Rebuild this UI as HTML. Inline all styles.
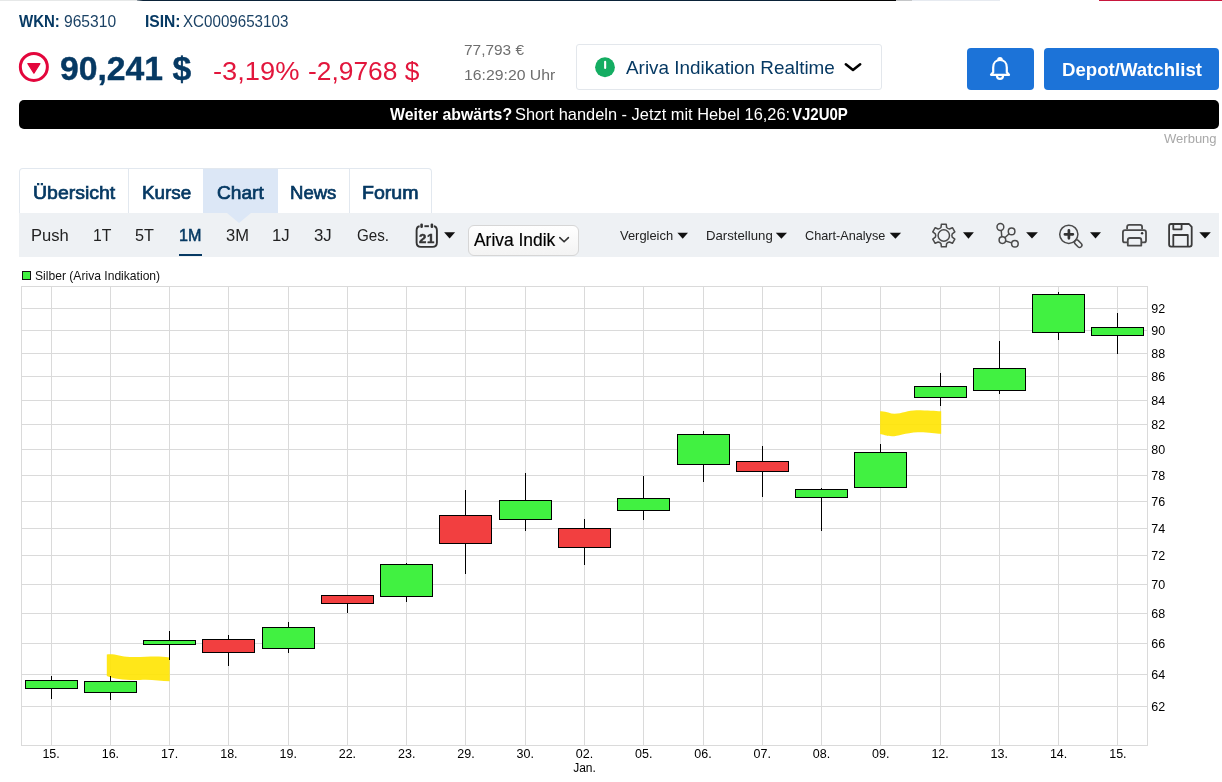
<!DOCTYPE html>
<html><head><meta charset="utf-8">
<style>
html,body{margin:0;padding:0;background:#fff;width:1222px;height:782px;overflow:hidden;position:relative;font-family:"Liberation Sans",sans-serif}
.t{position:absolute;line-height:0;white-space:nowrap;transform-origin:0 0}
svg{will-change:transform}
.b{position:absolute;box-sizing:border-box}
</style></head><body>

<div class="b" style="left:0;top:0;width:137px;height:1px;background:#e6e8e8"></div>
<div class="b" style="left:137px;top:0;width:6px;height:1px;background:linear-gradient(90deg,#9aa3aa,#0a2238)"></div>
<div class="b" style="left:143px;top:0;width:677px;height:1px;background:#0a2238"></div>
<div class="b" style="left:820px;top:0;width:76px;height:1px;background:#050505"></div>
<div class="b" style="left:896px;top:0;width:16px;height:1px;background:#c4c6c8"></div>
<div class="b" style="left:912px;top:0;width:88px;height:1px;background:#e6eaf0"></div>
<div class="b" style="left:1099px;top:0;width:123px;height:1px;background:#c8163c"></div>
<div class="b" style="left:0;top:1px;width:1222px;height:1px;background:rgba(255,255,255,0)"></div>
<div class="b" style="left:576px;top:44px;width:306px;height:46px;border:1px solid #e3e7ec;border-radius:3px"></div>
<div class="b" style="left:967px;top:48px;width:67px;height:42px;background:#1c73d8;border-radius:4px"></div>
<div class="b" style="left:1044px;top:48px;width:175px;height:42px;background:#1c73d8;border-radius:4px"></div>
<div class="b" style="left:19px;top:100px;width:1200px;height:29px;background:#000;border-radius:5px"></div>
<div class="b" style="left:19px;top:168px;width:413px;height:46px;border:1px solid #e2e8ef;border-bottom:none;border-radius:4px 4px 0 0"></div>
<div class="b" style="left:128px;top:169px;width:1px;height:44px;background:#e2e8ef"></div>
<div class="b" style="left:203px;top:169px;width:75px;height:44px;background:#dce7f6"></div>
<div class="b" style="left:349px;top:169px;width:1px;height:44px;background:#e2e8ef"></div>
<div class="b" style="left:19px;top:213px;width:1200px;height:44px;background:#eef1f4"></div>
<div class="b" style="left:227px;top:213px;width:0;height:0;border-left:12px solid transparent;border-right:12px solid transparent;border-top:10px solid #dce7f6"></div>
<div class="b" style="left:179px;top:253.6px;width:22.8px;height:2.5px;background:#063963"></div>
<div class="b" style="left:468px;top:225px;width:111px;height:31px;border:1px solid #d6d6d6;border-radius:6px;background:linear-gradient(#fff,#f3f3f3)"></div>
<div class="b" style="left:22px;top:271px;width:9px;height:9px;background:#41f141;border:1px solid #111"></div>

<svg style="position:absolute;left:0;top:0" width="1222" height="782" font-family="Liberation Sans"><line x1="21.5" y1="706.5" x2="1147.5" y2="706.5" stroke="#dadada" stroke-width="1"/>
<line x1="21.5" y1="674.5" x2="1147.5" y2="674.5" stroke="#dadada" stroke-width="1"/>
<line x1="21.5" y1="643.5" x2="1147.5" y2="643.5" stroke="#dadada" stroke-width="1"/>
<line x1="21.5" y1="613.5" x2="1147.5" y2="613.5" stroke="#dadada" stroke-width="1"/>
<line x1="21.5" y1="584.5" x2="1147.5" y2="584.5" stroke="#dadada" stroke-width="1"/>
<line x1="21.5" y1="555.5" x2="1147.5" y2="555.5" stroke="#dadada" stroke-width="1"/>
<line x1="21.5" y1="528.5" x2="1147.5" y2="528.5" stroke="#dadada" stroke-width="1"/>
<line x1="21.5" y1="501.5" x2="1147.5" y2="501.5" stroke="#dadada" stroke-width="1"/>
<line x1="21.5" y1="475.5" x2="1147.5" y2="475.5" stroke="#dadada" stroke-width="1"/>
<line x1="21.5" y1="449.5" x2="1147.5" y2="449.5" stroke="#dadada" stroke-width="1"/>
<line x1="21.5" y1="424.5" x2="1147.5" y2="424.5" stroke="#dadada" stroke-width="1"/>
<line x1="21.5" y1="400.5" x2="1147.5" y2="400.5" stroke="#dadada" stroke-width="1"/>
<line x1="21.5" y1="376.5" x2="1147.5" y2="376.5" stroke="#dadada" stroke-width="1"/>
<line x1="21.5" y1="353.5" x2="1147.5" y2="353.5" stroke="#dadada" stroke-width="1"/>
<line x1="21.5" y1="330.5" x2="1147.5" y2="330.5" stroke="#dadada" stroke-width="1"/>
<line x1="21.5" y1="308.5" x2="1147.5" y2="308.5" stroke="#dadada" stroke-width="1"/>
<line x1="51.5" y1="286.5" x2="51.5" y2="745.5" stroke="#dadada" stroke-width="1"/>
<line x1="110.5" y1="286.5" x2="110.5" y2="745.5" stroke="#dadada" stroke-width="1"/>
<line x1="169.5" y1="286.5" x2="169.5" y2="745.5" stroke="#dadada" stroke-width="1"/>
<line x1="228.5" y1="286.5" x2="228.5" y2="745.5" stroke="#dadada" stroke-width="1"/>
<line x1="288.5" y1="286.5" x2="288.5" y2="745.5" stroke="#dadada" stroke-width="1"/>
<line x1="347.5" y1="286.5" x2="347.5" y2="745.5" stroke="#dadada" stroke-width="1"/>
<line x1="406.5" y1="286.5" x2="406.5" y2="745.5" stroke="#dadada" stroke-width="1"/>
<line x1="465.5" y1="286.5" x2="465.5" y2="745.5" stroke="#dadada" stroke-width="1"/>
<line x1="525.5" y1="286.5" x2="525.5" y2="745.5" stroke="#dadada" stroke-width="1"/>
<line x1="584.5" y1="286.5" x2="584.5" y2="745.5" stroke="#dadada" stroke-width="1"/>
<line x1="643.5" y1="286.5" x2="643.5" y2="745.5" stroke="#dadada" stroke-width="1"/>
<line x1="703.5" y1="286.5" x2="703.5" y2="745.5" stroke="#dadada" stroke-width="1"/>
<line x1="762.5" y1="286.5" x2="762.5" y2="745.5" stroke="#dadada" stroke-width="1"/>
<line x1="821.5" y1="286.5" x2="821.5" y2="745.5" stroke="#dadada" stroke-width="1"/>
<line x1="880.5" y1="286.5" x2="880.5" y2="745.5" stroke="#dadada" stroke-width="1"/>
<line x1="940.5" y1="286.5" x2="940.5" y2="745.5" stroke="#dadada" stroke-width="1"/>
<line x1="999.5" y1="286.5" x2="999.5" y2="745.5" stroke="#dadada" stroke-width="1"/>
<line x1="1058.5" y1="286.5" x2="1058.5" y2="745.5" stroke="#dadada" stroke-width="1"/>
<line x1="1117.5" y1="286.5" x2="1117.5" y2="745.5" stroke="#dadada" stroke-width="1"/>
<rect x="21.5" y="286.5" width="1126" height="459" fill="none" stroke="#dadada" stroke-width="1"/>
<path d="M106.8,654.4 C115,653.5 120,656.5 130,657 C145,657.5 155,655.5 169.7,657.5 L169.7,681.2 C160,681 150,679 140,680 C125,680.5 115,679 106.8,676 Z" fill="#ffe400" opacity="0.9"/>
<path d="M880.1,411.3 C886,410.8 890,413.8 894.5,413.8 C902,413.5 908,410.2 916.5,410.2 C928,410.2 935,411 941.2,411.3 L941.2,433.7 C935,433.5 928,432 918,432.2 C905,432.8 898,436.3 892,436.3 C886,436.3 883,434.5 880.1,434.1 Z" fill="#ffe400" opacity="0.9"/>
<line x1="51.5" y1="676" x2="51.5" y2="699" stroke="#000" stroke-width="1"/>
<rect x="25.5" y="680.5" width="52" height="8.0" fill="#41f141" stroke="#000" stroke-width="1"/>
<line x1="110.5" y1="676" x2="110.5" y2="700" stroke="#000" stroke-width="1"/>
<rect x="84.5" y="681.5" width="52" height="11.0" fill="#41f141" stroke="#000" stroke-width="1"/>
<line x1="169.5" y1="631" x2="169.5" y2="660" stroke="#000" stroke-width="1"/>
<rect x="143.5" y="640.5" width="52" height="4.0" fill="#41f141" stroke="#000" stroke-width="1"/>
<line x1="228.5" y1="635" x2="228.5" y2="666" stroke="#000" stroke-width="1"/>
<rect x="202.5" y="639.5" width="52" height="13.0" fill="#f23f40" stroke="#000" stroke-width="1"/>
<line x1="288.5" y1="622" x2="288.5" y2="653" stroke="#000" stroke-width="1"/>
<rect x="262.5" y="627.5" width="52" height="21.0" fill="#41f141" stroke="#000" stroke-width="1"/>
<line x1="347.5" y1="595" x2="347.5" y2="613" stroke="#000" stroke-width="1"/>
<rect x="321.5" y="595.5" width="52" height="8.0" fill="#f23f40" stroke="#000" stroke-width="1"/>
<line x1="406.5" y1="563" x2="406.5" y2="602" stroke="#000" stroke-width="1"/>
<rect x="380.5" y="564.5" width="52" height="32.0" fill="#41f141" stroke="#000" stroke-width="1"/>
<line x1="465.5" y1="490" x2="465.5" y2="574" stroke="#000" stroke-width="1"/>
<rect x="439.5" y="515.5" width="52" height="28.0" fill="#f23f40" stroke="#000" stroke-width="1"/>
<line x1="525.5" y1="473" x2="525.5" y2="531" stroke="#000" stroke-width="1"/>
<rect x="499.5" y="500.5" width="52" height="19.0" fill="#41f141" stroke="#000" stroke-width="1"/>
<line x1="584.5" y1="519" x2="584.5" y2="565" stroke="#000" stroke-width="1"/>
<rect x="558.5" y="528.5" width="52" height="19.0" fill="#f23f40" stroke="#000" stroke-width="1"/>
<line x1="643.5" y1="476" x2="643.5" y2="520" stroke="#000" stroke-width="1"/>
<rect x="617.5" y="498.5" width="52" height="12.0" fill="#41f141" stroke="#000" stroke-width="1"/>
<line x1="703.5" y1="431" x2="703.5" y2="482" stroke="#000" stroke-width="1"/>
<rect x="677.5" y="434.5" width="52" height="30.0" fill="#41f141" stroke="#000" stroke-width="1"/>
<line x1="762.5" y1="446" x2="762.5" y2="497" stroke="#000" stroke-width="1"/>
<rect x="736.5" y="461.5" width="52" height="10.0" fill="#f23f40" stroke="#000" stroke-width="1"/>
<line x1="821.5" y1="488" x2="821.5" y2="531" stroke="#000" stroke-width="1"/>
<rect x="795.5" y="489.5" width="52" height="8.0" fill="#41f141" stroke="#000" stroke-width="1"/>
<line x1="880.5" y1="444" x2="880.5" y2="487" stroke="#000" stroke-width="1"/>
<rect x="854.5" y="452.5" width="52" height="35.0" fill="#41f141" stroke="#000" stroke-width="1"/>
<line x1="940.5" y1="373" x2="940.5" y2="406" stroke="#000" stroke-width="1"/>
<rect x="914.5" y="386.5" width="52" height="11.0" fill="#41f141" stroke="#000" stroke-width="1"/>
<line x1="999.5" y1="341" x2="999.5" y2="394" stroke="#000" stroke-width="1"/>
<rect x="973.5" y="368.5" width="52" height="22.0" fill="#41f141" stroke="#000" stroke-width="1"/>
<line x1="1058.5" y1="292" x2="1058.5" y2="340" stroke="#000" stroke-width="1"/>
<rect x="1032.5" y="294.5" width="52" height="38.0" fill="#41f141" stroke="#000" stroke-width="1"/>
<line x1="1117.5" y1="313" x2="1117.5" y2="354" stroke="#000" stroke-width="1"/>
<rect x="1091.5" y="327.5" width="52" height="8.0" fill="#41f141" stroke="#000" stroke-width="1"/>
<text x="1151.2" y="710.85" font-size="12.5" fill="#000">62</text>
<text x="1151.2" y="678.85" font-size="12.5" fill="#000">64</text>
<text x="1151.2" y="647.85" font-size="12.5" fill="#000">66</text>
<text x="1151.2" y="617.85" font-size="12.5" fill="#000">68</text>
<text x="1151.2" y="588.85" font-size="12.5" fill="#000">70</text>
<text x="1151.2" y="559.85" font-size="12.5" fill="#000">72</text>
<text x="1151.2" y="532.85" font-size="12.5" fill="#000">74</text>
<text x="1151.2" y="505.85" font-size="12.5" fill="#000">76</text>
<text x="1151.2" y="479.85" font-size="12.5" fill="#000">78</text>
<text x="1151.2" y="453.85" font-size="12.5" fill="#000">80</text>
<text x="1151.2" y="428.85" font-size="12.5" fill="#000">82</text>
<text x="1151.2" y="404.85" font-size="12.5" fill="#000">84</text>
<text x="1151.2" y="380.85" font-size="12.5" fill="#000">86</text>
<text x="1151.2" y="357.85" font-size="12.5" fill="#000">88</text>
<text x="1151.2" y="334.85" font-size="12.5" fill="#000">90</text>
<text x="1151.2" y="312.85" font-size="12.5" fill="#000">92</text>
<text x="51.1" y="758" font-size="12.5" fill="#000" text-anchor="middle">15.</text>
<text x="110.4" y="758" font-size="12.5" fill="#000" text-anchor="middle">16.</text>
<text x="169.6" y="758" font-size="12.5" fill="#000" text-anchor="middle">17.</text>
<text x="228.9" y="758" font-size="12.5" fill="#000" text-anchor="middle">18.</text>
<text x="288.2" y="758" font-size="12.5" fill="#000" text-anchor="middle">19.</text>
<text x="347.4" y="758" font-size="12.5" fill="#000" text-anchor="middle">22.</text>
<text x="406.7" y="758" font-size="12.5" fill="#000" text-anchor="middle">23.</text>
<text x="466.0" y="758" font-size="12.5" fill="#000" text-anchor="middle">29.</text>
<text x="525.2" y="758" font-size="12.5" fill="#000" text-anchor="middle">30.</text>
<text x="584.5" y="758" font-size="12.5" fill="#000" text-anchor="middle">02.</text>
<text x="643.8" y="758" font-size="12.5" fill="#000" text-anchor="middle">05.</text>
<text x="703.0" y="758" font-size="12.5" fill="#000" text-anchor="middle">06.</text>
<text x="762.3" y="758" font-size="12.5" fill="#000" text-anchor="middle">07.</text>
<text x="821.5" y="758" font-size="12.5" fill="#000" text-anchor="middle">08.</text>
<text x="880.8" y="758" font-size="12.5" fill="#000" text-anchor="middle">09.</text>
<text x="940.1" y="758" font-size="12.5" fill="#000" text-anchor="middle">12.</text>
<text x="999.3" y="758" font-size="12.5" fill="#000" text-anchor="middle">13.</text>
<text x="1058.6" y="758" font-size="12.5" fill="#000" text-anchor="middle">14.</text>
<text x="1117.9" y="758" font-size="12.5" fill="#000" text-anchor="middle">15.</text>
<text x="584.5" y="771.7" font-size="12" fill="#000" text-anchor="middle">Jan.</text></svg>
<div id="wkn_l" class="t" style="left:19.30px;top:21.42px;font-size:16.15px;font-weight:700;color:#063963;transform:scaleX(0.9294)">WKN:</div>
<div id="wkn_v" class="t" style="left:63.69px;top:20.51px;font-size:16.15px;font-weight:400;color:#1b4265;transform:scaleX(0.9670)">965310</div>
<div id="isin_l" class="t" style="left:144.99px;top:21.40px;font-size:16.15px;font-weight:700;color:#063963;transform:scaleX(0.9665)">ISIN:</div>
<div id="isin_v" class="t" style="left:183.42px;top:20.69px;font-size:16.15px;font-weight:400;color:#1b4265;transform:scaleX(0.9387)">XC0009653103</div>
<div id="price" class="t" style="left:59.77px;top:67.62px;font-size:34.00px;font-weight:700;color:#063963;transform:scaleX(0.9910);-webkit-text-stroke:0.4px currentColor">90,241 $</div>
<div id="chg1" class="t" style="left:212.60px;top:70.65px;font-size:26.40px;font-weight:400;color:#e2163c;transform:scaleX(1.0337)">-3,19%</div>
<div id="chg2" class="t" style="left:308.21px;top:70.65px;font-size:26.40px;font-weight:400;color:#e2163c;transform:scaleX(0.9986)">-2,9768 $</div>
<div id="eur" class="t" style="left:464.48px;top:49.75px;font-size:15.10px;font-weight:400;color:#6e6e6e;transform:scaleX(1.0206)">77,793 €</div>
<div id="time" class="t" style="left:464.31px;top:74.60px;font-size:15.10px;font-weight:400;color:#6e6e6e;transform:scaleX(1.0458)">16:29:20 Uhr</div>
<div id="dd" class="t" style="left:625.71px;top:68.16px;font-size:17.70px;font-weight:400;color:#063963;transform:scaleX(1.0675)">Ariva Indikation Realtime</div>
<div id="depot" class="t" style="left:1062.07px;top:70.41px;font-size:17.90px;font-weight:700;color:#ffffff;transform:scaleX(1.0403)">Depot/Watchlist</div>
<div id="ban1" class="t" style="left:390.14px;top:114.86px;font-size:16.60px;font-weight:700;color:#ffffff;transform:scaleX(0.9546)">Weiter abwärts?</div>
<div id="ban2" class="t" style="left:514.66px;top:114.97px;font-size:16.60px;font-weight:400;color:#ffffff;transform:scaleX(0.9876)">Short handeln - Jetzt mit Hebel 16,26:</div>
<div id="ban3" class="t" style="left:792.35px;top:114.86px;font-size:16.60px;font-weight:700;color:#ffffff;transform:scaleX(0.9032)">VJ2U0P</div>
<div id="werb" class="t" style="left:1163.53px;top:139.14px;font-size:12.90px;font-weight:400;color:#a8a8a8;transform:scaleX(1.0103)">Werbung</div>
<div id="tab1" class="t" style="left:33.28px;top:193.36px;font-size:18.60px;font-weight:400;color:#063963;transform:scaleX(1.0469);-webkit-text-stroke:0.7px currentColor">Übersicht</div>
<div id="tab2" class="t" style="left:141.50px;top:193.36px;font-size:18.60px;font-weight:400;color:#063963;transform:scaleX(1.0139);-webkit-text-stroke:0.7px currentColor">Kurse</div>
<div id="tab3" class="t" style="left:216.84px;top:193.36px;font-size:18.60px;font-weight:400;color:#063963;transform:scaleX(1.0282);-webkit-text-stroke:0.7px currentColor">Chart</div>
<div id="tab4" class="t" style="left:290.00px;top:193.36px;font-size:18.60px;font-weight:400;color:#063963;transform:scaleX(0.9974);-webkit-text-stroke:0.7px currentColor">News</div>
<div id="tab5" class="t" style="left:362.21px;top:193.36px;font-size:18.60px;font-weight:400;color:#063963;transform:scaleX(1.0527);-webkit-text-stroke:0.7px currentColor">Forum</div>
<div id="tb1" class="t" style="left:30.53px;top:235.74px;font-size:16.00px;font-weight:400;color:#222222;transform:scaleX(1.0342)">Push</div>
<div id="tb2" class="t" style="left:92.57px;top:235.60px;font-size:16.00px;font-weight:400;color:#222222;transform:scaleX(0.9875)">1T</div>
<div id="tb3" class="t" style="left:135.32px;top:235.64px;font-size:16.00px;font-weight:400;color:#222222;transform:scaleX(1.0135)">5T</div>
<div id="tb4" class="t" style="left:179.27px;top:235.76px;font-size:16.00px;font-weight:400;color:#063963;transform:scaleX(1.0097);-webkit-text-stroke:0.5px currentColor">1M</div>
<div id="tb5" class="t" style="left:225.54px;top:235.51px;font-size:16.00px;font-weight:400;color:#222222;transform:scaleX(1.0321)">3M</div>
<div id="tb6" class="t" style="left:272.35px;top:235.71px;font-size:16.00px;font-weight:400;color:#222222;transform:scaleX(1.0473)">1J</div>
<div id="tb7" class="t" style="left:314.03px;top:235.55px;font-size:16.00px;font-weight:400;color:#222222;transform:scaleX(1.0511)">3J</div>
<div id="tb8" class="t" style="left:356.87px;top:235.60px;font-size:16.00px;font-weight:400;color:#222222;transform:scaleX(0.9485)">Ges.</div>
<div id="vgl" class="t" style="left:620.15px;top:236.24px;font-size:12.60px;font-weight:400;color:#222222;transform:scaleX(1.0251)">Vergleich</div>
<div id="dar" class="t" style="left:706.24px;top:236.25px;font-size:12.60px;font-weight:400;color:#222222;transform:scaleX(1.0475)">Darstellung</div>
<div id="ana" class="t" style="left:805.35px;top:236.26px;font-size:12.60px;font-weight:400;color:#222222;transform:scaleX(1.0066)">Chart-Analyse</div>
<div id="sel" class="t" style="left:474.38px;top:239.86px;font-size:18.30px;font-weight:400;color:#000000;transform:scaleX(0.9519);-webkit-text-stroke:0.2px currentColor">Ariva Indik</div>
<div id="leg" class="t" style="left:34.89px;top:275.98px;font-size:12.22px;font-weight:400;color:#111111;transform:scaleX(0.9907)">Silber (Ariva Indikation)</div>
<svg style="position:absolute;left:0;top:0" width="1222" height="782" font-family="Liberation Sans"><circle cx="33.85" cy="66.95" r="13.5" fill="none" stroke="#e3063c" stroke-width="3"/><path d="M27.9,63.6 L39.9,63.6 L33.9,73.2 Z" fill="#e3063c" stroke="#e3063c" stroke-width="1.2" stroke-linejoin="round"/><circle cx="605" cy="67.25" r="9.9" fill="#14ad62"/><line x1="605.15" y1="61.8" x2="605.15" y2="67.9" stroke="#fff" stroke-width="2.1" stroke-linecap="round"/><path d="M845.8,64.2 L853,70 L860.2,64.2" fill="none" stroke="#000" stroke-width="2.5" stroke-linecap="round" stroke-linejoin="round"/><g fill="none" stroke="#fff" stroke-width="2.2" stroke-linecap="round" stroke-linejoin="round"><path d="M993.2,72.2 V67.4 C993.2,62.8 996.2,60 1000,60 C1003.8,60 1006.8,62.8 1006.8,67.4 V72.2 L1009,74.8 H991 Z"/><path d="M998.3,59.9 C998.3,57.6 1001.7,57.6 1001.7,59.9"/><path d="M996.9,75.8 C997.1,80 1002.9,80 1003.1,75.8"/></g><g fill="none" stroke="#333" stroke-width="1.9"><path d="M419.6,226.2 Q416.6,226.6 416.6,230.6 V242.6 Q416.6,246.9 420.9,246.9 H432.6 Q436.9,246.9 436.9,242.6 V230.6 Q436.9,226.6 433.9,226.2"/><path d="M424.4,226.2 H428.9"/></g><rect x="420.3" y="223.6" width="2.6" height="4.4" rx="1.2" fill="#333"/><rect x="430.6" y="223.6" width="2.6" height="4.4" rx="1.2" fill="#333"/><text x="426.9" y="242.9" font-size="13.2" font-weight="bold" fill="#333" text-anchor="middle" letter-spacing="0.6" stroke="#333" stroke-width="0.5" style="font-weight:700">21</text><path d="M444.1,232.2 L455.1,232.2 L449.6,238.6 Z" fill="#111"/><path d="M677.4,232.7 L688.0,232.7 L682.7,238.8 Z" fill="#111"/><path d="M775.8,232.7 L787.0,232.7 L781.4,238.8 Z" fill="#111"/><path d="M889.7,232.7 L901.1,232.7 L895.4000000000001,238.8 Z" fill="#111"/><path d="M963.0,232.3 L973.9,232.3 L968.45,238.7 Z" fill="#111"/><path d="M1026.1,232.3 L1037.9,232.3 L1032.0,238.6 Z" fill="#111"/><path d="M1090.0,232.3 L1101.0,232.3 L1095.5,238.6 Z" fill="#111"/><path d="M1199.3,232.3 L1210.8,232.3 L1205.05,238.6 Z" fill="#111"/><path d="M559.8,237.6 L564.1,241.8 L568.4,237.6" fill="none" stroke="#333" stroke-width="1.6" stroke-linecap="round" stroke-linejoin="round"/><path d="M941.00,227.37 L941.39,224.15 L946.21,224.15 L946.60,227.37 Q947.65,228.83 949.44,229.01 L952.42,227.74 L954.83,231.92 L952.24,233.86 Q951.50,235.50 952.24,237.14 L954.83,239.08 L952.42,243.26 L949.44,241.99 Q947.65,242.17 946.60,243.63 L946.21,246.85 L941.39,246.85 L941.00,243.63 Q939.95,242.17 938.16,241.99 L935.18,243.26 L932.77,239.08 L935.36,237.14 Q936.10,235.50 935.36,233.86 L932.77,231.92 L935.18,227.74 L938.16,229.01 Q939.95,228.83 941.00,227.37 Z" fill="none" stroke="#4a4a4a" stroke-width="1.5" stroke-linejoin="round"/><circle cx="943.8" cy="235.5" r="5.7" fill="none" stroke="#4a4a4a" stroke-width="1.5"/><g fill="none" stroke="#4a4a4a" stroke-width="1.5"><circle cx="1000.4" cy="227" r="3.4"/><circle cx="1011.6" cy="231.4" r="3.3"/><circle cx="1002.4" cy="240.1" r="3.3"/><circle cx="1014.9" cy="243.8" r="3.3"/><path d="M1001.2,230.3 L1001.8,236.8 M1004.8,237.7 L1009.2,233.8 M1005.6,241 L1011.7,242.9"/></g><g fill="none" stroke="#4a4a4a" stroke-width="1.5"><circle cx="1068.8" cy="234.3" r="9.1"/><rect x="-4.2" y="-2.3" width="8.6" height="4.6" rx="2.3" transform="translate(1078.1,243.6) rotate(45)"/></g><path d="M1064.9,234.3 H1072.9 M1068.9,230.3 V238.3" stroke="#333" stroke-width="2.7" stroke-linecap="round"/><g fill="none" stroke="#4a4a4a" stroke-width="1.8" stroke-linejoin="round"><path d="M1127.1,229.3 V227 Q1127.1,224.9 1129.2,224.9 H1140 Q1142.1,224.9 1142.1,227 V229.3"/><path d="M1127,242.4 H1124.9 Q1122.9,242.4 1122.9,240.4 V232.4 Q1122.9,230.2 1125.1,230.2 H1143.9 Q1146,230.2 1146,232.4 V240.4 Q1146,242.4 1144,242.4 H1142"/><path d="M1127.8,245.6 V240.2 Q1127.8,238 1130,238 H1139.2 Q1141.3,238 1141.3,240.2 V245.6 H1127.8 Z"/></g><circle cx="1142.1" cy="233.2" r="1.2" fill="#333"/><g fill="none" stroke="#3a3a3a" stroke-width="1.8" stroke-linejoin="round"><path d="M1171,224 H1189 L1191.7,226.9 V244.6 Q1191.7,246.6 1189.7,246.6 H1171 Q1169.1,246.6 1169.1,244.6 V226 Q1169.1,224 1171,224 Z"/><path d="M1173.3,224 V229.3 H1181.6 V224"/><path d="M1173.3,246.6 V235 H1187.8 V246.6"/></g></svg>
</body></html>
